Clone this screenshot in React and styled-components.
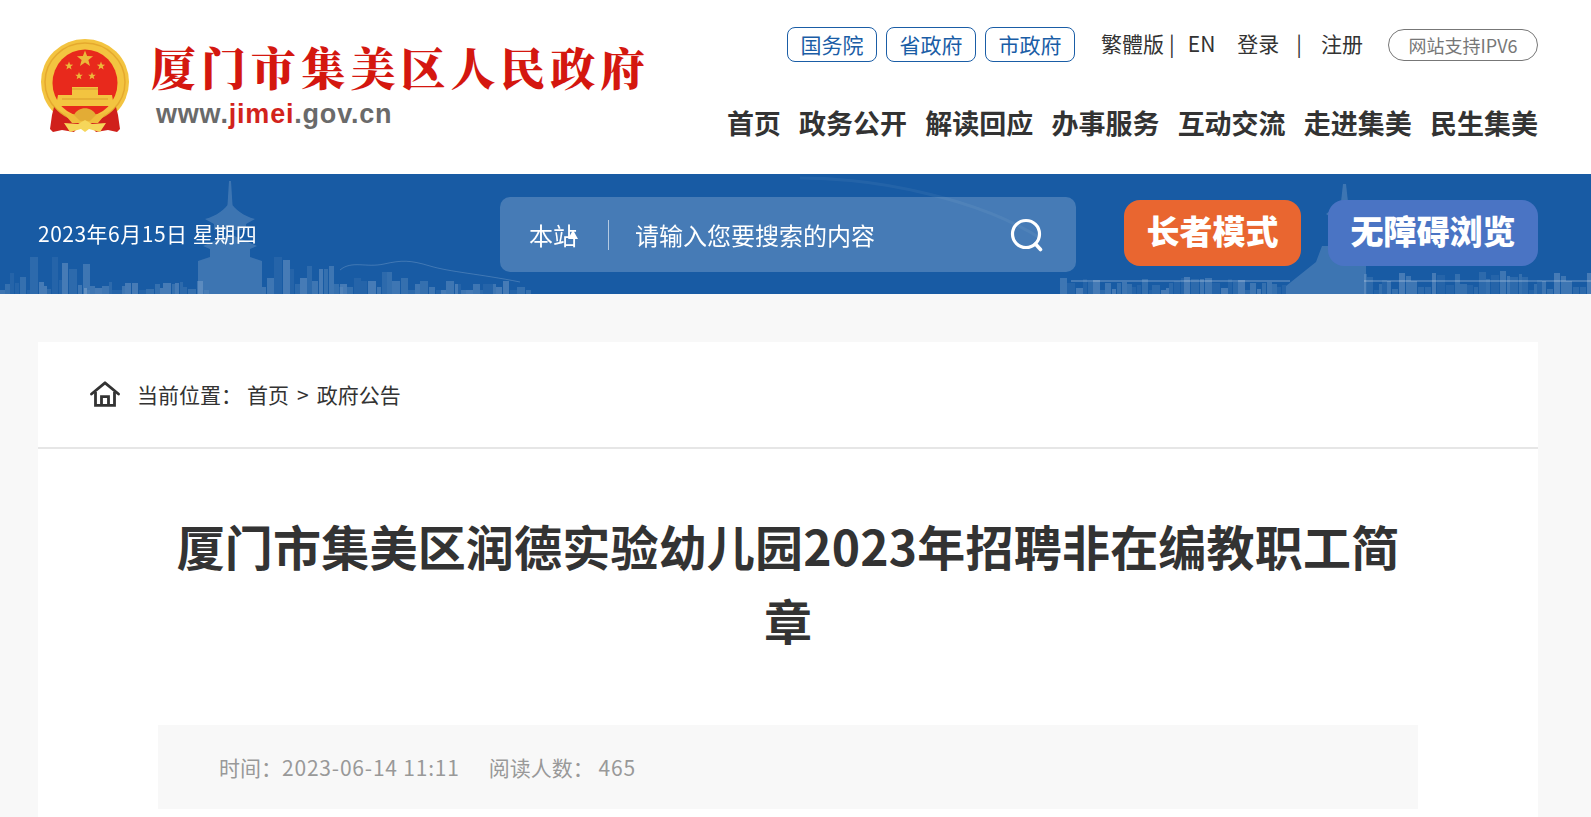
import React from 'react';
import styled, { createGlobalStyle } from 'styled-components';

const GlobalStyle = createGlobalStyle`
  html, body {
    margin: 0;
    padding: 0;
    overflow: hidden;
    height: 817px;
    background: #f8f8f8;
    font-family: "Noto Sans CJK SC", "Noto Sans", sans-serif;
    color: #333;
  }
  * { box-sizing: border-box; }
`;

// 横幅背景里的建筑剪影，用固定种子生成，不用随机数
const buildBlocks = (from, to, maxH, seed) => {
  const blocks = [];
  let x = from;
  let n = seed;
  while (x < to) {
    n = (n * 37 + 11) % 101;
    const w = 3 + (n % 6);
    const h = 4 + ((n * 3) % maxH);
    blocks.push({ x, y: 120 - h, w, h, o: 0.06 + (n % 5) * 0.035 });
    x += w + (n % 2);
  }
  return blocks;
};

const SKYLINE = [
  ...buildBlocks(0, 84, 34, 7),
  ...buildBlocks(84, 205, 10, 23),
  ...buildBlocks(262, 340, 36, 41),
  ...buildBlocks(340, 420, 24, 17),
  ...buildBlocks(420, 530, 12, 31),
  ...buildBlocks(1060, 1285, 14, 13),
  ...buildBlocks(1364, 1591, 20, 71),
];

const Skyline = () => (
  <BannerArt viewBox="0 0 1591 120" preserveAspectRatio="none" aria-hidden="true">
    <defs>
      <filter id="soft">
        <feGaussianBlur stdDeviation="0.7" />
      </filter>
    </defs>
    <g filter="url(#soft)">
      {SKYLINE.map((b, i) => (
        <rect key={i} x={b.x} y={b.y} width={b.w} height={b.h} fill="#fff" opacity={b.o} />
      ))}
      {/* 左边的楼阁 */}
      <g fill="#fff" opacity="0.16">
        <path d="M229 7h2l1.5 24h-5z" />
        <path d="M205 45c12 -3 20 -10 25 -17c5 7 13 14 25 17l-9 5v6h-32v-6z" />
        <path d="M203 72l27 -12 27 12 -7 3v8l12 4v33h-64v-33l12 -4v-8z" />
      </g>
      {/* 右边的楼阁 */}
      <g fill="#fff" opacity="0.16">
        <path d="M1343 10h3l2 18h-7z" />
        <path d="M1326 40l18 -14 18 14 -6 4v30h-24v-30z" />
        <path d="M1286 112l30 -24 6 -16h44v48h-80z" />
      </g>
    </g>
    <path d="M340 96 C352 86 366 94 384 90 S410 86 430 92 S480 100 520 108" fill="none" stroke="#fff" strokeOpacity="0.18" />
    <path d="M800 4 C880 4 980 26 1040 64" fill="none" stroke="#fff" strokeOpacity="0.05" strokeWidth="3" />
    <path d="M1071 107 H1290 M1364 107 H1591" fill="none" stroke="#fff" strokeOpacity="0.2" strokeWidth="2" />
  </BannerArt>
);

const Star = ({ cx, cy, r }) => {
  const pts = [];
  for (let i = 0; i < 10; i++) {
    const rad = i % 2 ? r * 0.42 : r;
    const a = (Math.PI / 5) * i - Math.PI / 2;
    pts.push(`${cx + rad * Math.cos(a)},${cy + rad * Math.sin(a)}`);
  }
  return <polygon points={pts.join(' ')} fill="#ecb83a" />;
};

const Emblem = () => (
  <EmblemSvg viewBox="0 0 90 94" aria-hidden="true">
    <ellipse cx="45" cy="43" rx="44" ry="43" fill="#f3c440" />
    <ellipse cx="45" cy="43" rx="40" ry="39" fill="none" stroke="#e5a92e" strokeWidth="1.5" />
    <ellipse cx="45" cy="44" rx="32.5" ry="33.5" fill="#e8291c" />
    <Star cx={45} cy={20} r={8.5} />
    <Star cx={29} cy={27} r={4.4} />
    <Star cx={61} cy={27} r={4.4} />
    <Star cx={39} cy={37} r={4} />
    <Star cx={52} cy={37} r={4} />
    <path d="M32 48 H58 V56 H72 L74 67 H16 L18 56 H32z" fill="#f3c440" />
    <path d="M32 50 H58 M22 60 H68" stroke="#d99c2a" strokeWidth="1" />
    <path d="M14 68 C22 78 34 82 42 84 L34 93 L22 91 L13 93 L10 90 L12 76z" fill="#d0201b" />
    <path d="M76 68 C68 78 56 82 48 84 L56 93 L68 91 L77 93 L80 90 L78 76z" fill="#d0201b" />
    <path d="M22 72 C32 78 58 78 68 72 L58 84 H32z" fill="#f0bd3c" />
    <path d="M34 76 C38 67 52 67 56 76 L50 82 H40z" fill="#e3ac35" />
    <path d="M24 84 L38 85 L45 81 L52 85 L66 84 L60 93 L49 90 L45 93 L41 90 L30 93z" fill="#f6d65a" />
  </EmblemSvg>
);

const SearchGlyph = () => (
  <SearchSvg viewBox="0 0 34 34" aria-hidden="true">
    <circle cx="16" cy="16" r="13.5" fill="none" stroke="#fff" strokeWidth="3.2" />
    <path d="M25.5 26l5 5.5" stroke="#fff" strokeWidth="3.6" strokeLinecap="round" />
  </SearchSvg>
);

const HomeGlyph = () => (
  <HomeSvg viewBox="0 0 30 26" aria-hidden="true">
    <path d="M1.5 13 L15 1.8 L28.5 13" fill="none" stroke="#333" strokeWidth="2.8" strokeLinecap="round" strokeLinejoin="round" />
    <path d="M5.5 11 V24.4 H24.5 V11" fill="none" stroke="#333" strokeWidth="2.8" />
    <path d="M11.5 24.4 V15.6 H18.5 V24.4" fill="none" stroke="#333" strokeWidth="2.8" />
  </HomeSvg>
);

const App = () => (
  <>
    <GlobalStyle />
    <Header>
      <Logo>
        <Emblem />
        <LogoText>
          <LogoTitle>厦门市集美区人民政府</LogoTitle>
          <LogoUrl>
            www.<em>jimei</em>.gov.cn
          </LogoUrl>
        </LogoText>
      </Logo>
      <HeaderRight>
        <TopLinks>
          <GovLink>国务院</GovLink>
          <GovLink>省政府</GovLink>
          <GovLink>市政府</GovLink>
          <TextLink $left={26}>繁體版</TextLink>
          <TextLink $left={5}>|</TextLink>
          <TextLink $left={13}>EN</TextLink>
          <TextLink $left={22}>登录</TextLink>
          <TextLink $left={17}>|</TextLink>
          <TextLink $left={19}>注册</TextLink>
          <IpvTag>网站支持IPV6</IpvTag>
        </TopLinks>
        <Nav>
          {['首页', '政务公开', '解读回应', '办事服务', '互动交流', '走进集美', '民生集美'].map((item) => (
            <NavItem key={item}>{item}</NavItem>
          ))}
        </Nav>
      </HeaderRight>
    </Header>

    <Banner>
      <Skyline />
      <DateText>2023年6月15日 星期四</DateText>
      <SearchBox>
        <Scope>
          本站
          <ScopeArrow />
        </Scope>
        <SearchDivider />
        <Placeholder>请输入您要搜索的内容</Placeholder>
        <SearchGlyph />
      </SearchBox>
      <ModeButton $bg="#e96630" $width={177} $left={48}>长者模式</ModeButton>
      <ModeButton $bg="#4a74c4" $width={210} $left={27}>无障碍浏览</ModeButton>
    </Banner>

    <Card>
      <Crumbs>
        <HomeGlyph />
        <CrumbLabel>当前位置：</CrumbLabel>
        <span>首页</span>
        <CrumbSep>&gt;</CrumbSep>
        <span>政府公告</span>
      </Crumbs>
      <Article>
        <Title>厦门市集美区润德实验幼儿园2023年招聘非在编教职工简章</Title>
        <Meta>
          <span>时间：<Digits>2023-06-14 11:11</Digits></span>
          <span>阅读人数： <Digits>465</Digits></span>
        </Meta>
      </Article>
    </Card>
  </>
);

const Header = styled.header`
  height: 174px;
  background: #fff;
  display: flex;
  justify-content: space-between;
  padding: 27px 53px 0 40px;
`;

const Logo = styled.div`
  display: flex;
  align-items: flex-start;
  padding-top: 12px;
  gap: 21px;
`;

const EmblemSvg = styled.svg`
  width: 90px;
  height: 94px;
  display: block;
`;

const LogoText = styled.div`
  display: flex;
  flex-direction: column;
`;

const LogoTitle = styled.div`
  font-family: "Noto Serif CJK SC", "Noto Sans CJK SC", serif;
  font-size: 45px;
  line-height: 48px;
  font-weight: 900;
  letter-spacing: 4.9px;
  color: #d4170f;
  margin-top: 4px;
  white-space: nowrap;
`;

const LogoUrl = styled.div`
  font-family: "Liberation Sans", Arial, sans-serif;
  font-size: 27px;
  line-height: 34px;
  font-weight: 700;
  color: #6a6a6a;
  margin: 6px 0 0 5px;
  letter-spacing: 0.8px;

  em {
    font-style: normal;
    color: #d2231c;
  }
`;

const HeaderRight = styled.div`
  display: flex;
  flex-direction: column;
  align-items: flex-end;
`;

const TopLinks = styled.div`
  display: flex;
  align-items: center;
  height: 35px;
  font-size: 21px;
`;

const GovLink = styled.a`
  width: 90px;
  height: 35px;
  margin-right: 9px;
  padding-bottom: 2px;
  border: 1px solid #1a5da6;
  border-radius: 8px;
  color: #1a5da6;
  display: flex;
  align-items: center;
  justify-content: center;

  &:nth-child(3) {
    margin-right: 0;
  }
`;

const TextLink = styled.a`
  margin-left: ${(p) => p.$left}px;
  margin-top: -2px;
  color: #333;
  line-height: 35px;
`;

const IpvTag = styled.span`
  margin-left: 25px;
  width: 150px;
  height: 32px;
  border: 1px solid #777;
  border-radius: 16px;
  color: #777;
  font-size: 18px;
  display: flex;
  align-items: center;
  justify-content: center;
`;

const Nav = styled.nav`
  display: flex;
  gap: 18.2px;
  margin-top: 41px;
`;

const NavItem = styled.a`
  font-size: 27px;
  line-height: 40px;
  font-weight: 700;
  color: #333;
`;

const Banner = styled.section`
  position: relative;
  height: 120px;
  background: #185ba4;
  display: flex;
  align-items: center;
  padding-left: 38px;
  overflow: hidden;
`;

const BannerArt = styled.svg`
  position: absolute;
  left: 0;
  top: 0;
  width: 100%;
  height: 100%;
`;

const DateText = styled.div`
  position: relative;
  width: 462px;
  font-size: 21px;
  letter-spacing: 0.5px;
  color: #fff;
  white-space: nowrap;
  margin-top: -2px;
`;

const SearchBox = styled.div`
  position: relative;
  width: 576px;
  height: 75px;
  border-radius: 10px;
  background: rgba(255, 255, 255, 0.2);
  display: flex;
  align-items: center;
  padding-left: 29px;
  color: #fff;
  font-size: 24px;
  margin-top: 1px;
`;

const Scope = styled.div`
  position: relative;
  width: 79px;
`;

const ScopeArrow = styled.i`
  position: absolute;
  left: 39px;
  top: 13px;
  border-left: 5px solid transparent;
  border-right: 5px solid transparent;
  border-bottom: 9px solid #fff;
`;

const SearchDivider = styled.div`
  width: 1px;
  height: 30px;
  background: rgba(255, 255, 255, 0.6);
`;

const Placeholder = styled.div`
  flex: 1;
  margin-left: 26px;
`;

const SearchSvg = styled.svg`
  width: 34px;
  height: 34px;
  margin-right: 32px;
`;

const ModeButton = styled.button`
  position: relative;
  width: ${(p) => p.$width}px;
  height: 66px;
  margin-left: ${(p) => p.$left}px;
  border: 0;
  padding: 0 0 5px;
  border-radius: 16px;
  background: ${(p) => p.$bg};
  color: #fff;
  font-family: inherit;
  font-size: 33px;
  font-weight: 900;
  margin-top: -3px;
`;

const Card = styled.main`
  width: 1500px;
  height: 640px;
  margin: 48px 0 0 38px;
  background: #fff;
`;

const Crumbs = styled.div`
  height: 107px;
  border-bottom: 2px solid #e6e6e6;
  padding: 0 0 2px 52px;
  display: flex;
  align-items: center;
  font-size: 21px;
  color: #333;
`;

const HomeSvg = styled.svg`
  width: 30px;
  height: 26px;
  margin-right: 17px;
`;

const CrumbLabel = styled.span`
  width: 110px;
`;

const CrumbSep = styled.span`
  margin: 0 8px;
`;

const Article = styled.div`
  padding: 59px 120px 0;
`;

const Title = styled.h1`
  margin: 0;
  font-size: 48px;
  line-height: 74px;
  font-weight: 700;
  letter-spacing: 0.2px;
  color: #333;
  text-align: center;
`;

const Meta = styled.div`
  margin-top: 69px;
  height: 84px;
  background: #f8f8f8;
  padding-left: 61px;
  display: flex;
  align-items: center;
  gap: 29px;
  font-size: 21px;
  color: #999;
`;

const Digits = styled.span`
  letter-spacing: 0.8px;
`;

export default App;
